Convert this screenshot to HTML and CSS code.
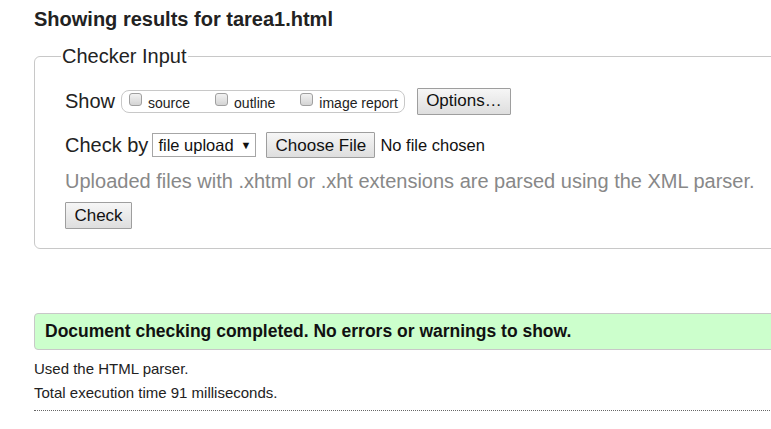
FILE: index.html
```html
<!DOCTYPE html>
<html>
<head>
<meta charset="utf-8">
<link rel="stylesheet" href="styles.css">
</head>
<body>
<div class="page">
  <h2 class="title">Showing results for tarea1.html</h2>
  <fieldset class="input">
    <legend>Checker Input</legend>
    <div class="row row-show">
      <span class="lbl">Show</span>
      <span class="opts">
        <label class="opt"><span class="cb"></span>source</label>
        <label class="opt"><span class="cb"></span>outline</label>
        <label class="opt"><span class="cb"></span>image report</label>
      </span>
      <button class="btn btn-options">Options…</button>
    </div>
    <div class="row row-check">
      <span class="lbl">Check by</span>
      <span class="select">file upload <span class="arrow">▼</span></span>
      <button class="btn btn-file">Choose File</button>
      <span class="nofile">No file chosen</span>
    </div>
    <p class="hint">Uploaded files with .xhtml or .xht extensions are parsed using the XML parser.</p>
    <button class="btn btn-check">Check</button>
  </fieldset>
  <div class="success">Document checking completed. No errors or warnings to show.</div>
  <p class="meta meta-first">Used the HTML parser.</p>
  <p class="meta">Total execution time 91 milliseconds.</p>
  <hr class="dots">
</div>
</body>
</html>
```

FILE: styles.css
```css
html, body {
  margin: 0;
  padding: 0;
  background: #fff;
  overflow: hidden;
}
body {
  font-family: "Liberation Sans", Arial, sans-serif;
  color: #111;
}
.page {
  width: 900px;
  padding: 0 0 0 34px;
}
.title {
  margin: 0;
  padding-top: 7px;
  font-size: 20px;
  font-weight: bold;
  line-height: 24px;
  color: #222;
}
.input {
  margin: 13px 0 0 0;
  padding: 0 0 19px 30px;
  border: 1px solid #c8c8c8;
  border-radius: 6px;
}
.input legend {
  font-size: 20px;
  padding: 0 1px;
  margin-left: -4px;
  color: #222;
  line-height: 24px;
}
.row {
  display: flex;
  align-items: center;
}
.row-show {
  margin-top: 19px;
  height: 28px;
}
.lbl {
  font-size: 20px;
  color: #222;
}
.opts {
  display: flex;
  align-items: center;
  margin-left: 6px;
  height: 21px;
  padding: 0 6px 0 7px;
  border: 1px solid #c8c8c8;
  border-radius: 8px;
  gap: 25px;
}
.opt {
  display: flex;
  align-items: center;
  font-size: 14px;
  color: #222;
  padding-top: 4px;
}
.cb {
  display: inline-block;
  width: 11px;
  height: 11px;
  border: 1px solid #a0a0a0;
  border-radius: 3px;
  background: linear-gradient(#f2f2f2, #d4d4d4);
  margin-right: 6px;
  margin-top: -8px;
}
.btn {
  font-family: "Liberation Sans", Arial, sans-serif;
  background: linear-gradient(#f6f6f6, #dedede);
  border: 1px solid #9e9e9e;
  color: #111;
  padding: 0;
  border-radius: 1px;
}
.btn-options {
  margin-left: 12px;
  width: 94px;
  height: 27px;
  font-size: 17px;
}
.row-check {
  margin-top: 17px;
  height: 26px;
}
.select {
  margin-left: 4px;
  height: 24px;
  width: 104px;
  box-sizing: border-box;
  border: 1px solid #a6a6a6;
  font-size: 16.5px;
  padding-left: 5px;
  display: flex;
  align-items: center;
  background: #fff;
  color: #111;
}
.arrow {
  font-size: 11px;
  margin-left: 7px;
}
.btn-file {
  margin-left: 10px;
  width: 109px;
  height: 26px;
  font-size: 17px;
  padding-top: 2px;
}
.nofile {
  font-size: 16.5px;
  margin-left: 5px;
  color: #111;
}
.hint {
  margin: 11px 0 0 0;
  font-size: 20px;
  line-height: 24px;
  color: #888;
}
.btn-check {
  margin-top: 9px;
  width: 67px;
  height: 27px;
  font-size: 17px;
}
.success {
  margin-top: 64px;
  height: 37px;
  box-sizing: border-box;
  background: #ccffcc;
  border: 1px solid #c8c8c8;
  border-radius: 4px;
  font-weight: bold;
  font-size: 17.5px;
  line-height: 35px;
  padding-left: 10px;
  color: #111;
}
.meta {
  margin: 0;
  font-size: 15px;
  line-height: 24px;
  color: #222;
}
.meta-first {
  margin-top: 7px;
}
.dots {
  margin: 5px 0 0 0;
  border: 0;
  border-top: 1px dotted #666;
  height: 0;
}
```
